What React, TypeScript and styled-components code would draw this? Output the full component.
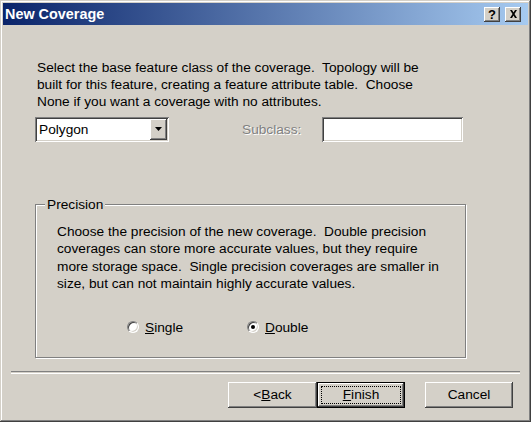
import React from "react";
import styled, { createGlobalStyle, css } from "styled-components";

const Global = createGlobalStyle`
  html, body { margin: 0; padding: 0; background: #d4d0c8; }
  body { font-family: "Liberation Sans", Arial, sans-serif; }
`;

const face = "#d4d0c8";

const Window = styled.div`
  box-sizing: border-box;
  width: 531px;
  height: 422px;
  padding: 3px;
  background: ${face};
  display: flex;
  flex-direction: column;
  box-shadow: inset -1px -1px #404040, inset 1px 1px ${face},
    inset -2px -2px #808080, inset 2px 2px #fff;
  font-size: 13.7px;
  color: #000;
`;

const TitleBar = styled.div`
  height: 22px;
  display: flex;
  align-items: center;
  padding: 0 7px 0 2px;
  background: linear-gradient(to right, #0a246a, #a6caf0);
  color: #fff;
`;

const Title = styled.div`
  flex: 1;
  font-weight: bold;
  font-size: 14.4px;
`;

const raised = css`
  background: ${face};
  box-shadow: inset -1px -1px #404040, inset 1px 1px #fff,
    inset -2px -2px #808080, inset 2px 2px ${face};
`;

const CapButton = styled.div`
  ${raised};
  width: 16px;
  height: 15px;
  margin-left: 5px;
  display: flex;
  align-items: center;
  justify-content: center;
  color: #000;
  font-weight: bold;
  font-size: 13px;
  line-height: 1;
`;

const Body = styled.div`
  display: flex;
  flex-direction: column;
  padding-left: 32px;
`;

const Intro = styled.p`
  margin: 34px 0 0 2px;
  line-height: 17.2px;
  white-space: pre;
`;

const Row = styled.div`
  display: flex;
  align-items: center;
  margin-top: 6px;
`;

const sunken = css`
  box-sizing: border-box;
  background: #fff;
  box-shadow: inset 1px 1px #808080, inset -1px -1px #fff,
    inset 2px 2px #404040, inset -2px -2px ${face};
`;

const Combo = styled.div`
  ${sunken};
  width: 134px;
  height: 25px;
  display: flex;
  align-items: center;
  padding: 2px;
`;

const ComboText = styled.div`
  flex: 1;
  padding-left: 2px;
`;

const ComboButton = styled.div`
  ${raised};
  width: 17px;
  height: 21px;
  display: flex;
  align-items: center;
  justify-content: center;
`;

const DisabledLabel = styled.div`
  width: 80px;
  margin-left: 73px;
  color: #808080;
  text-shadow: 1px 1px 0 #fff;
`;

const TextBox = styled.div`
  ${sunken};
  width: 141px;
  height: 25px;
`;

const Group = styled.fieldset`
  box-sizing: border-box;
  width: 431px;
  height: 161px;
  margin: 55px 0 0 0;
  padding: 0 0 0 21px;
  border: 1px solid #808080;
  box-shadow: 1px 1px 0 #fff, inset 1px 1px 0 #fff;
  min-width: 0;
`;

const Legend = styled.legend`
  margin-left: -12px;
  padding: 0 2px;
  line-height: 16px;
  background: ${face};
`;

const GroupText = styled.p`
  margin: 10px 0 0 0;
  line-height: 17.6px;
  white-space: pre;
`;

const RadioRow = styled.div`
  display: flex;
  align-items: center;
  margin: 27px 0 0 70px;
`;

const RadioItem = styled.div<{ $w?: number }>`
  display: flex;
  align-items: center;
  width: ${(p) => (p.$w ? `${p.$w}px` : "auto")};
`;

const RadioCircle = styled.span<{ $on?: boolean }>`
  box-sizing: border-box;
  width: 12px;
  height: 12px;
  border-radius: 50%;
  border: 1px solid;
  border-color: #808080 #fff #fff #808080;
  background: #fff;
  box-shadow: inset 1px 1px 0 #404040, inset -1px -1px 0 ${face};
  margin-right: 6px;
  display: flex;
  align-items: center;
  justify-content: center;
  &::after {
    content: "";
    display: ${(p) => (p.$on ? "block" : "none")};
    width: 4px;
    height: 4px;
    border-radius: 50%;
    background: #000;
  }
`;

const Key = styled.span`
  text-decoration: underline;
`;

const Separator = styled.div`
  height: 1px;
  margin: 13px 8px 0 8px;
  border-top: 1px solid #808080;
  border-bottom: 1px solid #fff;
`;

const ButtonRow = styled.div`
  display: flex;
  justify-content: flex-end;
  padding: 8px 15px 0 0;
`;

const Button = styled.div<{ $default?: boolean; $gap?: number; $w?: number }>`
  ${raised};
  box-sizing: border-box;
  width: ${(p) => p.$w ?? 88}px;
  height: 26px;
  margin-left: ${(p) => p.$gap ?? 0}px;
  display: flex;
  align-items: center;
  justify-content: center;
  position: relative;
  ${(p) =>
    p.$default &&
    css`
      box-shadow: inset 0 0 0 1px #000, inset -2px -2px #404040,
        inset 2px 2px #fff, inset -3px -3px #808080, inset 3px 3px ${face};
      &::after {
        content: "";
        position: absolute;
        inset: 4px;
        border: 1px dotted #000;
      }
    `}
`;

export default function App() {
  return (
    <>
      <Global />
      <Window>
        <TitleBar>
          <Title>New Coverage</Title>
          <CapButton>?</CapButton>
          <CapButton>
            <svg width="9" height="8" viewBox="0 0 9 8">
              <path d="M1 0h2l1.5 2.5L6 0h2L5.5 4 8 8H6L4.5 5.5 3 8H1l2.5-4z" fill="#000" />
            </svg>
          </CapButton>
        </TitleBar>
        <Body>
          <Intro>
            {"Select the base feature class of the coverage.  Topology will be\nbuilt for this feature, creating a feature attribute table.  Choose\nNone if you want a coverage with no attributes."}
          </Intro>
          <Row>
            <Combo>
              <ComboText>Polygon</ComboText>
              <ComboButton>
                <svg width="7" height="4" viewBox="0 0 7 4">
                  <path d="M0 0h7L3.5 4z" fill="#000" />
                </svg>
              </ComboButton>
            </Combo>
            <DisabledLabel>Subclass:</DisabledLabel>
            <TextBox />
          </Row>
          <Group>
            <Legend>Precision</Legend>
            <GroupText>
              {"Choose the precision of the new coverage.  Double precision\ncoverages can store more accurate values, but they require\nmore storage space.  Single precision coverages are smaller in\nsize, but can not maintain highly accurate values."}
            </GroupText>
            <RadioRow>
              <RadioItem $w={120}>
                <RadioCircle />
                <span>
                  <Key>S</Key>ingle
                </span>
              </RadioItem>
              <RadioItem>
                <RadioCircle $on />
                <span>
                  <Key>D</Key>ouble
                </span>
              </RadioItem>
            </RadioRow>
          </Group>
        </Body>
        <Separator />
        <ButtonRow>
          <Button $w={89}>
            {"<"}
            <Key>B</Key>ack
          </Button>
          <Button $default>
            <Key>F</Key>inish
          </Button>
          <Button $gap={20}>Cancel</Button>
        </ButtonRow>
      </Window>
    </>
  );
}
